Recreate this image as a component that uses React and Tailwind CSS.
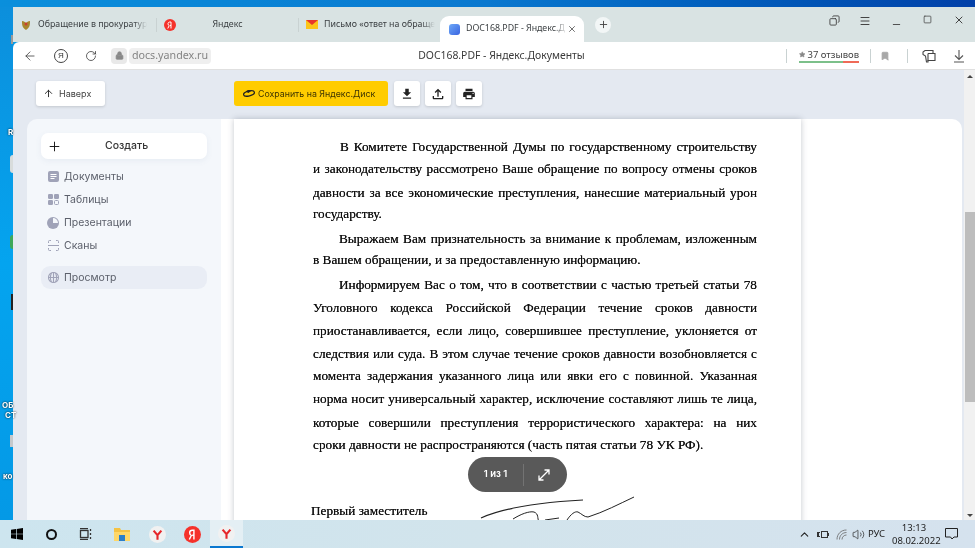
import {
  ArrowLeft,
  ArrowUp,
  Bookmark,
  ChevronUp,
  Copy,
  Lock,
  Menu,
  Minus,
  Plus,
  RotateCw,
  Square,
  Star,
  Volume2,
  X,
} from "lucide-react";
import { MdFileDownload, MdOutlineFileUpload, MdPrint } from "react-icons/md";

const docLines = [
  { text: "В Комитете Государственной Думы по государственному строительству", cls: "h-[22px] pl-[27px] [text-align-last:justify]" },
  { text: "и законодательству рассмотрено Ваше обращение по вопросу отмены сроков", cls: "h-[24px] [text-align-last:justify]" },
  { text: "давности за все экономические преступления, нанесшие материальный урон", cls: "h-[21px] [text-align-last:justify]" },
  { text: "государству.", cls: "h-[25px]" },
  { text: "Выражаем Вам признательность за внимание к проблемам, изложенным", cls: "h-[21px] pl-[26px] [text-align-last:justify]" },
  { text: "в Вашем обращении, и за предоставленную информацию.", cls: "h-[25px]" },
  { text: "Информируем Вас о том, что в соответствии с частью третьей статьи 78", cls: "h-[23px] pl-[26px] [text-align-last:justify]" },
  { text: "Уголовного кодекса Российской Федерации течение сроков давности", cls: "h-[23px] [text-align-last:justify]" },
  { text: "приостанавливается, если лицо, совершившее преступление, уклоняется от", cls: "h-[23px] [text-align-last:justify]" },
  { text: "следствия или суда. В этом случае течение сроков давности возобновляется с", cls: "h-[22px] [text-align-last:justify]" },
  { text: "момента задержания указанного лица или явки его с повинной. Указанная", cls: "h-[23px] [text-align-last:justify]" },
  { text: "норма носит универсальный характер, исключение составляют лишь те лица,", cls: "h-[24px] [text-align-last:justify]" },
  { text: "которые совершили преступления террористического характера: на них", cls: "h-[22px] [text-align-last:justify]" },
  { text: "сроки давности не распространяются (часть пятая статьи 78 УК РФ).", cls: "h-[22px]" },
];

function YaCircle({ size = 12 }) {
  return (
    <svg width={size} height={size} viewBox="0 0 24 24">
      <circle cx="12" cy="12" r="12" fill="#f5322b" />
      <path d="M14 19V6h-2.2c-2.4 0-3.8 1.5-3.8 3.6 0 1.8.8 2.9 2.3 3.8L7.5 19M14 13h-2.5" fill="none" stroke="#fff" strokeWidth="2" />
    </svg>
  );
}

function YaBrowser() {
  return (
    <svg width="17" height="17" viewBox="0 0 24 24">
      <circle cx="12" cy="12" r="12" fill="#f1f1f1" />
      <path d="M6.5 6.5L12 13l5.5-6.5M12 13v6.5" fill="none" stroke="#e5262a" strokeWidth="3" />
    </svg>
  );
}

function Sep() {
  return <div className="h-[14px] w-px bg-[#c9d2d2]" />;
}

function Tab({ icon, text, widthCls }) {
  return (
    <div className={"flex h-[35px] shrink-0 items-center pl-[5px] " + widthCls}>
      <div className="mr-[4px] flex w-[16px] shrink-0 items-center justify-center">{icon}</div>
      {text}
    </div>
  );
}

function TabBar() {
  return (
    <div className="flex h-[35px] shrink-0 items-center bg-[#d9e3e3] text-[8.8px] text-[#3c4043] [font-family:'Noto_Sans',sans-serif]">
      <Tab
        widthCls="w-[143px]"
        icon={
          <svg width="10" height="12" viewBox="0 0 10 12">
            <path d="M1 2c2 .5 3 .5 4 2 1-1.500 2-1.500 4-2 0 4 0 6-4 9-4-3-4-5-4-9z" fill="#a8862c" />
            <circle cx="5" cy="5" r="1.500" fill="#c9402f" />
          </svg>
        }
        text={
          <div className="whitespace-nowrap [mask-image:linear-gradient(to_right,#000_88%,transparent)]">
            Обращение в прокуратур
          </div>
        }
      />
      <Sep />
      <Tab
        widthCls="w-[141px]"
        icon={<YaCircle />}
        text={<div className="w-[91px] text-center">Яндекс</div>}
      />
      <Sep />
      <Tab
        widthCls="w-[141px]"
        icon={
          <svg width="12" height="9" viewBox="0 0 12 9">
            <rect width="12" height="9" fill="#fcc419" />
            <path d="M0 0h12L6 5z" fill="#e8352b" />
          </svg>
        }
        text={
          <div className="whitespace-nowrap [mask-image:linear-gradient(to_right,#000_88%,transparent)]">
            Письмо «ответ на обраще
          </div>
        }
      />
      <div className="flex h-[26px] w-[144px] shrink-0 items-center self-end rounded-t-[9px] bg-white pl-[9px]">
        <div className="h-[11px] w-[11px] rounded-[3px] bg-gradient-to-br from-[#6fa8f7] to-[#3b63e0]" />
        <div className="ml-[6px] w-[101px] whitespace-nowrap [mask-image:linear-gradient(to_right,#000_88%,transparent)]">
          DOC168.PDF - Яндекс.Д
        </div>
        <X size={10} className="text-[#555]" />
      </div>
      <div className="ml-[11px] flex h-[16px] w-[16px] items-center justify-center rounded-full bg-[#f2f6f6]">
        <Plus size={11} className="text-[#444]" />
      </div>
      <div className="ml-auto flex h-full items-start pt-[6px] text-[#444]">
        <Copy size={11} className="mr-[19px] mt-[2px] -scale-x-100" />
        <Menu size={12} className="mr-[20px] mt-[2px]" />
        <Minus size={11} className="mr-[21px] mt-[6px]" />
        <Square size={9} className="mr-[21px] mt-[2px]" />
        <X size={12} className="mr-[10px] mt-[1px]" />
      </div>
    </div>
  );
}

function AddressBar() {
  return (
    <div className="flex h-[28px] shrink-0 items-center rounded-tl-[6px] border-b border-[#e0e0e0] bg-white [font-family:'Noto_Sans',sans-serif]">
      <ArrowLeft size={14} strokeWidth={1.3} className="ml-[10px] text-[#333]" />
      <div className="ml-[17px] flex h-[14px] w-[14px] items-center justify-center rounded-full border border-[#444] text-[8px] text-[#333] [font-family:'Liberation_Sans',sans-serif]">
        Я
      </div>
      <RotateCw size={12} strokeWidth={1.5} className="ml-[17px] text-[#333]" />
      <div className="ml-[14px] flex h-[16px] w-[16px] items-center justify-center rounded-[4px] bg-[#e9e9e9]">
        <Lock size={9} fill="#888" className="text-[#888]" />
      </div>
      <div className="ml-[2px] flex h-[16px] w-[82px] items-center justify-center rounded-[4px] bg-[#efefef] text-[10.7px] text-[#848484]">
        docs.yandex.ru
      </div>
      <div className="ml-[204px] w-[173px] whitespace-nowrap text-center text-[10.4px] text-[#3a3a3a]">
        DOC168.PDF - Яндекс.Документы
      </div>
      <div className="ml-auto flex h-full items-center">
        <Sep />
        <div className="ml-[12px] flex h-[20px] w-[60px] flex-col justify-center">
          <div className="flex items-center whitespace-nowrap text-[9.5px] leading-[12px] text-[#444]">
            <Star size={9} fill="#888" className="mr-[2px] text-[#888]" />
            37 отзывов
          </div>
          <div className="flex h-[2px]">
            <div className="w-[44px] bg-[#7cc08a]" />
            <div className="w-[16px] bg-[#ef6a57]" />
          </div>
        </div>
        <div className="ml-[11px]">
          <Sep />
        </div>
        <Bookmark size={10} fill="#a8a8a8" className="ml-[9px] text-[#a8a8a8]" />
        <div className="ml-[17px]">
          <Sep />
        </div>
        <svg width="14" height="14" viewBox="0 0 14 14" fill="none" stroke="#444" strokeWidth="1.1" className="ml-[14px]">
          <path d="M3 1.500h8v3h2v7H6V13H4.500L3.500 7 1 5.500V3z" />
          <path d="M6 4.500h5M6 4.500V12" />
        </svg>
        <svg width="12" height="14" viewBox="0 0 12 14" fill="none" stroke="#555" strokeWidth="1.1" className="ml-[17px] mr-[10px]">
          <path d="M6 1v9M2 6.500L6 10.500l4-4M1 13h10" />
        </svg>
      </div>
    </div>
  );
}

function ToolBtn({ children }) {
  return (
    <div className="flex h-[25px] w-[26px] items-center justify-center rounded-[3px] bg-white text-[#222] shadow-[0_1px_3px_rgba(0,0,0,0.15)]">
      {children}
    </div>
  );
}

function Toolbar() {
  return (
    <div className="flex h-[49px] shrink-0 items-start pt-[11px]">
      <div className="ml-[23px] flex h-[25px] w-[69px] items-center rounded-[3px] bg-white pl-[7px] text-[9px] text-[#444] shadow-[0_1px_3px_rgba(0,0,0,0.15)]">
        <ArrowUp size={11} className="mr-[5px] text-[#222]" />
        Наверх
      </div>
      <div className="ml-[129px] flex h-[25px] w-[154px] items-center rounded-[3px] bg-[#ffcc00] pl-[9px] text-[8.8px] text-[#3d3400]">
        <svg width="12" height="9" viewBox="0 0 13 9" className="mr-[3px]">
          <ellipse cx="6.500" cy="4.500" rx="6" ry="2.600" fill="none" stroke="#222" strokeWidth="1.400" transform="rotate(-14 6.500 4.500)" />
          <path d="M3 2.500C5 .5 8 .5 9 1.500L6 4z" fill="#222" />
        </svg>
        Сохранить на Яндекс.Диск
      </div>
      <div className="ml-[6px] flex gap-[5px]">
        <ToolBtn>
          <MdFileDownload size={14} />
        </ToolBtn>
        <ToolBtn>
          <MdOutlineFileUpload size={16} />
        </ToolBtn>
        <ToolBtn>
          <MdPrint size={14} />
        </ToolBtn>
      </div>
    </div>
  );
}

function NavItem({ icon, label, active }) {
  return (
    <div className={"flex items-center pl-[5px] text-[10.5px] text-[#5c606b] " + (active ? "mt-[9px] h-[23px] rounded-[9px] bg-[#e9edf5]" : "h-[23px]")}>
      <div className="flex w-[14px] items-center justify-center">{icon}</div>
      <span className="ml-[4px]">{label}</span>
    </div>
  );
}

function Sidebar() {
  return (
    <div className="flex w-[194px] shrink-0 flex-col rounded-tl-[10px] bg-[#f4f7fb] px-[14px] pt-[14px]">
      <div className="mb-[6px] flex h-[26px] items-center rounded-[7px] bg-white pl-[6px] text-[10.5px] font-medium text-[#333] shadow-[0_2px_6px_rgba(90,110,150,0.08)]">
        <Plus size={15} strokeWidth={1.5} className="text-[#111]" />
        <span className="ml-[43px]">Создать</span>
      </div>
      <NavItem
        label="Документы"
        icon={
          <svg width="11" height="11" viewBox="0 0 11 11">
            <rect width="11" height="11" rx="2" fill="#a0a3b8" />
            <path d="M2.500 3.500h6M2.500 5.500h6M2.500 7.500h4" stroke="#fff" strokeWidth="1" />
          </svg>
        }
      />
      <NavItem
        label="Таблицы"
        icon={
          <svg width="11" height="11" viewBox="0 0 11 11" fill="#a0a3b8">
            <rect width="5" height="5" rx="1.200" />
            <rect x="6" width="5" height="5" rx="1.200" />
            <rect y="6" width="5" height="5" rx="1.200" />
            <rect x="6.500" y="6.500" width="4" height="4" rx="1" fill="none" stroke="#a0a3b8" />
          </svg>
        }
      />
      <NavItem
        label="Презентации"
        icon={
          <svg width="12" height="12" viewBox="0 0 12 12">
            <circle cx="6" cy="6" r="6" fill="#a0a3b8" />
            <path d="M6 1v5h5A5 5 0 0 0 6 1z" fill="#f4f7fb" />
          </svg>
        }
      />
      <NavItem
        label="Сканы"
        icon={
          <svg width="11" height="11" viewBox="0 0 11 11" fill="none" stroke="#a0a3b8" strokeWidth="1">
            <path d="M.5 3V1.500a1 1 0 0 1 1-1H3M8 .5h1.500a1 1 0 0 1 1 1V3M.5 8v1.500a1 1 0 0 0 1 1H3M8 10.500h1.500a1 1 0 0 0 1-1V8M0 5.500h11" />
          </svg>
        }
      />
      <NavItem
        active
        label="Просмотр"
        icon={
          <svg width="11" height="11" viewBox="0 0 11 11" fill="none" stroke="#a0a3b8" strokeWidth="1.100">
            <circle cx="5.500" cy="5.500" r="5" />
            <path d="M5.500 .5v10M.5 5.500h10M3.500 1c-1.500 3-1.500 6 0 9M7.500 1c1.500 3 1.500 6 0 9" />
          </svg>
        }
      />
    </div>
  );
}

function DocPage() {
  return (
    <div className="flex min-w-0 flex-1 rounded-tr-[10px] bg-white">
      <div className="relative ml-[13px] h-[500px] w-[567px] shrink-0 bg-white pl-[79px] pt-[17px] shadow-[0_0_6px_rgba(60,70,90,0.3)] [font-family:'Liberation_Serif',serif]">
        <div className="w-[444px] text-[13.25px] leading-[22px] text-[#111] [text-shadow:0_0_0.5px_#222]">
          {docLines.map((line) => (
            <div key={line.text} className={"whitespace-nowrap " + line.cls}>
              {line.text}
            </div>
          ))}
        </div>
        <div className="mt-[44px] -ml-[2px] text-[13.25px] leading-[22px] text-[#111] [text-shadow:0_0_0.5px_#222]">
          Первый заместитель
        </div>
        <svg width="170" height="30" viewBox="0 0 170 30" fill="none" stroke="#222" strokeWidth="1" className="absolute left-[245px] top-[377px]">
          <path d="M2 22C20 14 50 7 104 4" strokeWidth="1.200" />
          <path d="M34 23C42 18 50 15 55 16C60 18 58 22 60 26M66 24l14-2M88 24C92 18 96 15 99 16C103 18 105 21 109 21C125 16 140 8 155 1" />
        </svg>
      </div>
    </div>
  );
}

function Scrollbar() {
  return (
    <div className="flex w-[11px] shrink-0 flex-col items-center bg-[#f1f1f1]">
      <div className="mt-[5px] h-0 w-0 border-x-[3px] border-b-[3px] border-x-transparent border-b-[#444]" />
      <div className="ml-[1px] mt-[134px] h-[190px] w-[10px] bg-[#bdbdbd]" />
      <div className="mt-auto mb-[3px] h-0 w-0 border-x-[3px] border-t-[3px] border-x-transparent border-t-[#444]" />
    </div>
  );
}

function Taskbar() {
  return (
    <div className="flex h-[28px] shrink-0 items-center bg-gradient-to-r from-[#cde5ef] via-[#d2e4ec] to-[#d5e2ee] text-[#222] [font-family:'Noto_Sans',sans-serif]">
      <svg width="12" height="12" viewBox="0 0 12 12" fill="#000" className="ml-[11px]">
        <path d="M0 1.700L5 1v4.700H0zM5.700.9L12 0v5.700H5.700zM0 6.300h5V11l-5-.7zM5.700 6.300H12V12l-6.300-.9z" />
      </svg>
      <div className="ml-[23px] h-[11px] w-[11px] rounded-full border-[2px] border-[#111]" />
      <svg width="13" height="12" viewBox="0 0 13 12" fill="none" stroke="#333" strokeWidth="1.300" className="ml-[22px]">
        <rect x="1.500" y="2.500" width="7.500" height="7" />
        <path d="M1 .7h8M1 11.300h8M11.500 1v2M11.500 5v2M11.500 9v2" />
      </svg>
      <svg width="16" height="14" viewBox="0 0 16 14" className="ml-[22px]">
        <path d="M0 1h6l1 2h9v11H0z" fill="#f5c243" />
        <rect x="0" y="5" width="16" height="9" fill="#ffd767" />
        <rect x="5" y="8" width="6" height="6" fill="#2c7fc9" />
      </svg>
      <div className="ml-[19px] flex w-[17px] justify-center">
        <YaBrowser />
      </div>
      <div className="ml-[18px]">
        <YaCircle size={17} />
      </div>
      <div className="ml-[9px] flex h-full w-[33px] items-center justify-center border-b-[2px] border-[#0a78d0] bg-[#e4eff4]">
        <YaBrowser />
      </div>
      <div className="ml-auto flex items-center">
        <ChevronUp size={13} />
        <svg width="12" height="9" viewBox="0 0 12 9" fill="#333" className="ml-[6px]">
          <path d="M0 2h3v1H2v3h1v1H0zM4 1h7v2h1v3h-1v2H4zM5 2v5h5V2z" />
        </svg>
        <svg width="11" height="11" viewBox="0 0 11 11" fill="none" stroke="#666" strokeWidth="0.8" className="ml-[7px]">
          <path d="M1 10.500C1 5 5 1 10.500 1M3.500 10.500c0-4 3-7 7-7M6 10.500c0-2.500 2-4.500 4.500-4.500" />
        </svg>
        <Volume2 size={13} strokeWidth={1.3} className="ml-[5px]" />
        <span className="ml-[3px] text-[9.5px]">РУС</span>
        <div className="ml-[7px] w-[44px] text-center text-[9.5px] leading-[13px]">
          <div>13:13</div>
          <div>08.02.2022</div>
        </div>
        <svg width="13" height="12" viewBox="0 0 13 12" fill="none" stroke="#222" strokeWidth="1" className="ml-[9px] mr-[17px]">
          <path d="M.5.500h12v8.500H9L7 11 5.500 9H.5z" />
        </svg>
      </div>
    </div>
  );
}

function DesktopEdge() {
  return (
    <div className="relative w-[13px] shrink-0 bg-gradient-to-b from-[#0c8fdc] via-[#04a4ef] to-[#0499e6] text-[8px] font-bold leading-[10px] text-white">
      <div className="absolute left-[11px] top-[28px] h-[9px] w-[2px] bg-[#9a9a9a]" />
      <div className="absolute left-[8px] top-[120px] [text-shadow:0_0_2px_#000]">R</div>
      <div className="absolute left-[10px] top-[148px] h-[18px] w-[3px] rounded-l-full bg-[#d8dcdc]" />
      <div className="absolute left-[10px] top-[228px] h-[14px] w-[3px] rounded-l-full bg-[#3ea85a]" />
      <div className="absolute left-[11px] top-[287px] h-[16px] w-[2px] bg-[#222]" />
      <div className="absolute left-[2px] top-[393px] [text-shadow:0_0_2px_#000]">ОБ</div>
      <div className="absolute left-[5px] top-[403px] [text-shadow:0_0_2px_#000]">СТ</div>
      <div className="absolute left-[10px] top-[428px] h-[12px] w-[3px] bg-[#c5c9cc]" />
      <div className="absolute left-[3px] top-[464px] [text-shadow:0_0_2px_#000]">ко</div>
    </div>
  );
}

export default function App() {
  return (
    <div className="relative flex h-[548px] w-[975px] flex-col overflow-hidden bg-[#0a9ce6] blur-[0.35px] [font-family:Inter,'Liberation_Sans',sans-serif]">
      <div className="h-[7px] shrink-0 bg-gradient-to-r from-[#0a8fdc] via-[#0a78cf] to-[#0240a8]" />
      <div className="flex min-h-0 flex-1">
        <DesktopEdge />
        <div className="flex min-w-0 flex-1 flex-col">
          <TabBar />
          <AddressBar />
          <div className="flex min-h-0 flex-1 bg-[#e4e9f1]">
            <div className="flex min-w-0 flex-1 flex-col overflow-hidden">
              <Toolbar />
              <div className="flex min-h-0 flex-1 pl-[14px] pr-[2px]">
                <Sidebar />
                <DocPage />
              </div>
            </div>
            <Scrollbar />
          </div>
        </div>
      </div>
      <Taskbar />
      <div className="absolute left-[468px] top-[457px] flex h-[35px] w-[99px] items-center rounded-full bg-[#595959] text-[9.5px] font-semibold text-white">
        <span className="w-[55px] text-center">1 из 1</span>
        <div className="h-[22px] w-px bg-[#737373]" />
        <svg width="12" height="12" viewBox="0 0 12 12" fill="none" stroke="#fff" strokeWidth="1.300" className="ml-[14px]">
          <path d="M1 11L11 1M6.500 1H11v4.500M1 6.500V11h4.500" />
        </svg>
      </div>
    </div>
  );
}
